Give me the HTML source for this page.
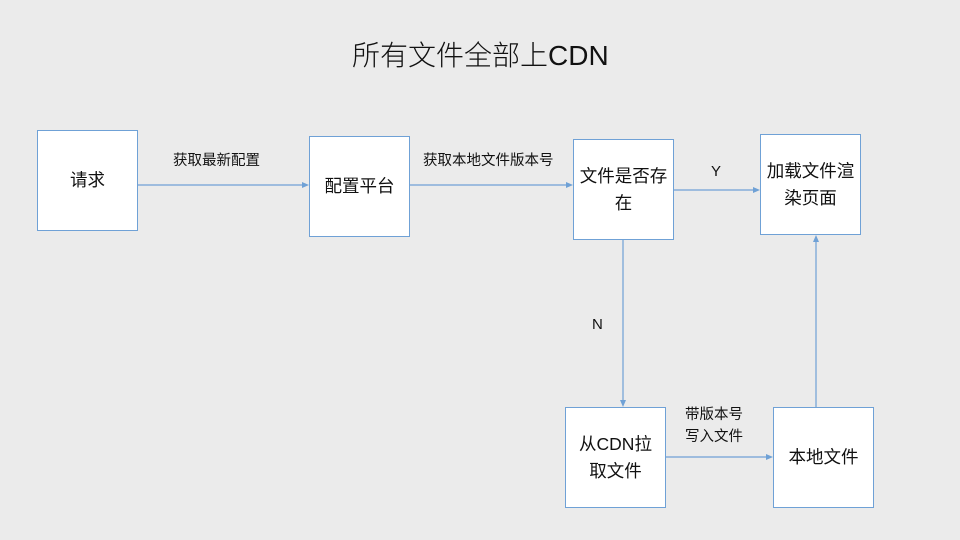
<!DOCTYPE html>
<html><head><meta charset="utf-8"><style>
body{margin:0;width:960px;height:540px;background:#ebebeb;position:relative;overflow:hidden;font-family:"Liberation Sans","Noto Sans CJK SC",sans-serif;color:#111}
.b{position:absolute;background:#fff;border:1px solid #6fa1d6;box-sizing:border-box;width:101px;height:101px;display:flex;align-items:center;justify-content:center;text-align:center;font-size:17.5px;line-height:27px}
.t{position:absolute;font-size:14.5px;line-height:22px;white-space:nowrap}
</style></head><body>
<div class="t" style="left:352px;top:36px;font-size:28px;line-height:40px;font-weight:300">所有文件全部上CDN</div>
<svg width="960" height="540" style="position:absolute;left:0;top:0">
<g stroke="#6fa1d6" stroke-width="1.2" fill="none">
<line x1="137" y1="185" x2="304" y2="185"/>
<line x1="409" y1="185" x2="568" y2="185"/>
<line x1="673" y1="190" x2="755" y2="190"/>
<line x1="623" y1="239" x2="623" y2="402"/>
<line x1="660" y1="457" x2="768" y2="457"/>
<line x1="816" y1="407" x2="816" y2="240"/>
</g>
<g fill="#6fa1d6">
<polygon points="309,185 302,182 302,188"/>
<polygon points="573,185 566,182 566,188"/>
<polygon points="760,190 753,187 753,193"/>
<polygon points="623,407 620,400 626,400"/>
<polygon points="773,457 766,454 766,460"/>
<polygon points="816,235 813,242 819,242"/>
</g>
</svg>
<div class="b" style="left:37px;top:130px">请求</div>
<div class="b" style="left:309px;top:136px">配置平台</div>
<div class="b" style="left:573px;top:139px;padding:0 4px">文件是否存<br>在</div>
<div class="b" style="left:760px;top:134px">加载文件渲<br>染页面</div>
<div class="b" style="left:565px;top:407px">从CDN拉<br>取文件</div>
<div class="b" style="left:773px;top:407px">本地文件</div>
<div class="t" style="left:173px;top:150px">获取最新配置</div>
<div class="t" style="left:423px;top:150px">获取本地文件版本号</div>
<div class="t" style="left:711px;top:161px;font-size:15px">Y</div>
<div class="t" style="left:592px;top:314px;font-size:15px">N</div>
<div class="t" style="left:685px;top:404px">带版本号<br>写入文件</div>
</body></html>
